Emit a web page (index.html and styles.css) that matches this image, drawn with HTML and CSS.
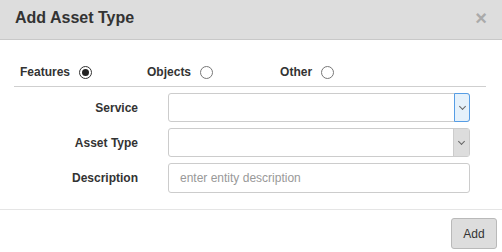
FILE: index.html
```html
<!DOCTYPE html>
<html lang="en">
<head>
    <meta charset="UTF-8">
    <title>Add Asset Type</title>
    <link rel="stylesheet" href="styles.css">
</head>
<body>
<div class="modal">
    <div class="modal-header">
        <h4>Add Asset Type</h4>
        <span class="close">&times;</span>
    </div>
    <div class="modal-body">
        <div class="type-row">
            <label class="type-option">Features <span class="radio checked"></span></label>
            <label class="type-option objects">Objects <span class="radio"></span></label>
            <label class="type-option other">Other <span class="radio"></span></label>
        </div>
        <div class="form-row">
            <label>Service</label>
            <div class="select focused"><span class="arrow"></span></div>
        </div>
        <div class="form-row">
            <label>Asset Type</label>
            <div class="select disabled"><span class="arrow"></span></div>
        </div>
        <div class="form-row">
            <label>Description</label>
            <div class="text-input">enter entity description</div>
        </div>
    </div>
    <div class="modal-footer">
        <button class="btn">Add</button>
    </div>
</div>
</body>
</html>
```
FILE: styles.css
```css
body {
    margin: 0;
    font-family: "Liberation Sans", Arial, sans-serif;
    color: #333;
    background: #fff;
}

.modal {
    width: 502px;
    height: 252px;
    overflow: hidden;
}

.modal-header {
    background-color: #dddddd;
    border-bottom: 1px solid #c8c8c8;
    height: 40px;
    box-sizing: border-box;
    display: flex;
    align-items: center;
    justify-content: space-between;
    padding: 0 15px 3px 15px;
}

.modal-header h4 {
    margin: 0;
    font-size: 16px;
    font-weight: bold;
    color: #333;
}

.close {
    font-size: 20px;
    font-weight: bold;
    color: #aaa;
    line-height: 1;
}

.modal-body {
    padding: 22px 16px 16px 14px;
    border-bottom: 1px solid #e5e5e5;
}

.type-row {
    display: flex;
    align-items: center;
    height: 24px;
    padding-left: 6px;
    border-bottom: 1px solid #cfcfcf;
    margin-bottom: 6px;
}

.type-option {
    font-size: 12px;
    font-weight: bold;
    display: flex;
    align-items: center;
    gap: 9px;
    margin-top: -4px;
}

.objects {
    margin-left: 55px;
}

.other {
    margin-left: 67px;
}

.radio {
    width: 11px;
    height: 11px;
    border: 1px solid #777;
    border-radius: 50%;
    background: #fff;
    position: relative;
}

.radio.checked {
    border-color: #333;
}

.radio.checked::after {
    content: "";
    position: absolute;
    left: 2px;
    top: 2px;
    width: 7px;
    height: 7px;
    border-radius: 50%;
    background: #222;
}

.form-row {
    display: flex;
    align-items: center;
    margin-top: 6px;
}

.form-row label {
    width: 124px;
    text-align: right;
    font-size: 12px;
    font-weight: bold;
    padding-right: 30px;
}

.select, .text-input {
    width: 302px;
    height: 29px;
    box-sizing: border-box;
    border: 1px solid #ccc;
    border-radius: 3px;
    display: flex;
    justify-content: flex-end;
}

.arrow {
    width: 16px;
    height: 100%;
    box-sizing: border-box;
    display: flex;
    align-items: center;
    justify-content: center;
    background: #ddd;
    border-left: 1px solid #ccc;
}

.arrow::after {
    content: "";
    width: 4px;
    height: 4px;
    border-right: 1px solid #666;
    border-bottom: 1px solid #666;
    transform: rotate(45deg);
    margin-top: -3px;
}

.select.focused .arrow {
    background: #e5f1fb;
    border: 1px solid #569de5;
    margin: -1px -1px -1px 0;
    height: 29px;
    border-radius: 0 3px 3px 0;
}

.text-input {
    justify-content: flex-start;
    align-items: center;
    padding-left: 11px;
    font-size: 12px;
    color: #999;
    height: 30px;
}

.modal-footer {
    display: flex;
    justify-content: flex-end;
    padding: 8px 5px;
}

.btn {
    font-family: "Liberation Sans", Arial, sans-serif;
    font-size: 12px;
    color: #333;
    background: #dddddd;
    border: 1px solid #b9b9b9;
    border-radius: 3px;
    width: 46px;
    height: 31px;
    padding: 0;
}
```
